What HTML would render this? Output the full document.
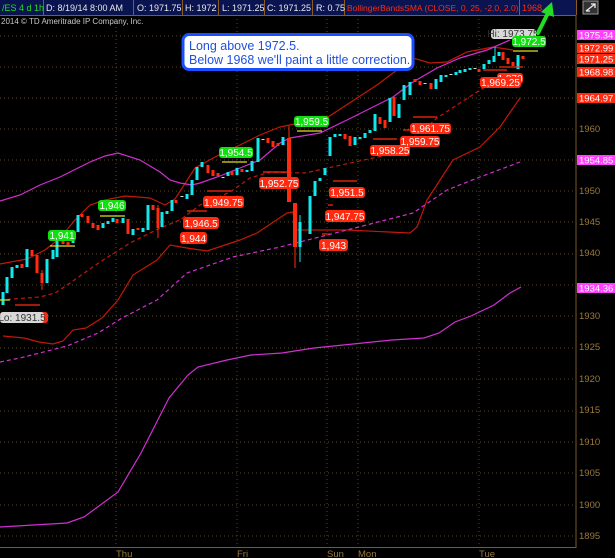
<!DOCTYPE html>
<html><head><meta charset="utf-8"><style>
html,body{margin:0;padding:0;background:#000;width:615px;height:558px;overflow:hidden}
svg{display:block;font-family:"Liberation Sans",sans-serif}
.c{fill:#10e8f0}.r{fill:#ff2a10}.w{fill:#ddd}
.lr text,.lg text,.lgr text{font-size:10px;fill:#fff;text-anchor:middle}
.lg text{fill:#fff}
.t{font-size:9.5px;fill:#9a7a3a}
</style></head><body>
<svg width="615" height="558" viewBox="0 0 615 558">
<rect width="615" height="558" fill="#000"/>
<g stroke="#5a4a20" stroke-width="1" stroke-dasharray="1,3">
<line x1="0" y1="36" x2="575" y2="36"/><line x1="0" y1="67" x2="575" y2="67"/><line x1="0" y1="98" x2="575" y2="98"/><line x1="0" y1="129" x2="575" y2="129"/><line x1="0" y1="160" x2="575" y2="160"/><line x1="0" y1="191" x2="575" y2="191"/><line x1="0" y1="222" x2="575" y2="222"/><line x1="0" y1="254" x2="575" y2="254"/><line x1="0" y1="285" x2="575" y2="285"/><line x1="0" y1="316" x2="575" y2="316"/><line x1="0" y1="348" x2="575" y2="348"/><line x1="0" y1="379" x2="575" y2="379"/><line x1="0" y1="411" x2="575" y2="411"/><line x1="0" y1="442" x2="575" y2="442"/><line x1="0" y1="473" x2="575" y2="473"/><line x1="0" y1="505" x2="575" y2="505"/><line x1="0" y1="536" x2="575" y2="536"/>
<line x1="116" y1="15" x2="116" y2="547"/><line x1="237" y1="15" x2="237" y2="547"/><line x1="327" y1="15" x2="327" y2="547"/><line x1="358" y1="15" x2="358" y2="547"/><line x1="479" y1="15" x2="479" y2="547"/>
</g>
<line x1="576" y1="15" x2="576" y2="548" stroke="#7a5a28"/>
<line x1="0" y1="547.5" x2="576" y2="547.5" stroke="#7a5a28"/>
<g class="t">
<text x="579" y="132">1960</text><text x="579" y="194">1950</text><text x="579" y="225">1945</text><text x="579" y="256">1940</text><text x="579" y="319">1930</text><text x="579" y="350">1925</text><text x="579" y="382">1920</text><text x="579" y="413">1915</text><text x="579" y="445">1910</text><text x="579" y="476">1905</text><text x="579" y="508">1900</text><text x="579" y="539">1895</text>
<text x="116" y="557">Thu</text><text x="237" y="557">Fri</text><text x="327" y="557">Sun</text><text x="358" y="557">Mon</text><text x="479" y="557">Tue</text>
</g>
<g fill="none" stroke-width="1.2">
<polyline stroke="#c01808" points="0,264 27,259 45,250 60,238 75,220 90,205 105,200 125,196 150,198 165,205 175,199 195,168 215,157 240,145 260,135 280,127 328,117 377,85 397,70 413,58 430,63 447,62 467,52 493,47 513,50"/>
<polyline stroke="#c01808" points="3,336 24,338 39,342 53,344 63,341 73,330 86,328 102,318 118,300 133,275 157,260 170,245 187,248 207,251 240,240 257,233 287,213 293,212 296,230 347,230 410,233 417,227 427,200 453,160 480,147 500,127 520,98"/>
<polyline stroke="#c01808" stroke-dasharray="4,3" points="0,300 40,297 55,293 70,283 100,262 130,243 160,228 180,220 200,205 230,192 250,178 270,172 305,173 373,158 397,153 437,118 480,90 505,75"/>
<polyline stroke="#d030d0" points="0,201 20,195 40,185 60,177 90,162 105,156 118,153 140,160 160,172 170,180 180,183 192,185 200,183 220,176 240,168 260,160 280,143 290,138 320,133 347,120 373,107 393,97 413,82 437,68 460,58 487,50 510,40"/>
<polyline stroke="#d030d0" stroke-dasharray="4,3" points="0,362 20,358 67,346 98,333 122,318 157,300 187,273 233,257 280,247 347,230 413,213 447,190 480,177 520,162"/>
<polyline stroke="#d030d0" points="0,527 67,523 84,517 118,492 141,453 169,398 188,375 198,367 227,360 251,355 282,353 314,348 353,344 392,340 424,338 439,333 455,322 471,316 494,305 510,293 521,287"/>
</g>
<g stroke-width="1">
<line x1="289" y1="126" x2="289" y2="202" stroke="#ff2a10"/><line x1="295" y1="203" x2="295" y2="268" stroke="#ff2a10"/><line x1="300" y1="215" x2="300" y2="262" stroke="#10e8f0"/><line x1="495" y1="47" x2="495" y2="60" stroke="#10e8f0"/><line x1="158" y1="205" x2="158" y2="238" stroke="#ff2a10"/><line x1="42" y1="270" x2="42" y2="290" stroke="#ff2a10"/>
</g>
<g>
<rect class="c" x="1.5" y="292" width="3" height="13"/><rect class="c" x="5.5" y="277" width="3" height="16"/><rect class="c" x="10.5" y="267" width="3" height="11"/><rect class="c" x="15.5" y="265" width="3" height="3"/><rect class="r" x="20.5" y="264" width="3" height="4"/><rect class="c" x="25.5" y="249" width="3" height="18"/><rect class="r" x="30.5" y="250" width="3" height="6"/><rect class="r" x="35.5" y="255" width="3" height="18"/><rect class="r" x="40.5" y="273" width="3" height="10"/><rect class="c" x="45.5" y="259" width="3" height="24"/><rect class="c" x="51.5" y="250" width="3" height="9"/><rect class="c" x="55.5" y="237" width="3" height="20"/><rect class="r" x="61.5" y="241" width="3" height="3"/><rect class="r" x="66.5" y="242" width="3" height="3"/><rect class="c" x="71.5" y="239" width="3" height="4"/><rect class="c" x="76.5" y="215" width="3" height="17"/><rect class="r" x="80.5" y="214" width="3" height="3"/><rect class="r" x="86.5" y="216" width="3" height="7"/><rect class="r" x="91.5" y="223" width="3" height="5"/><rect class="r" x="96.5" y="225" width="3" height="5"/><rect class="c" x="101.5" y="223" width="3" height="5"/><rect class="c" x="106.5" y="221" width="3" height="3"/><rect class="c" x="111.5" y="218" width="3" height="4"/><rect class="r" x="115.5" y="219" width="3" height="4"/><rect class="c" x="121.5" y="218" width="3" height="5"/><rect class="r" x="126.5" y="219" width="3" height="15"/><rect class="c" x="131.5" y="229" width="3" height="6"/><rect class="r" x="136.5" y="228" width="3" height="2"/><rect class="c" x="141.5" y="228" width="3" height="4"/><rect class="c" x="146.5" y="205" width="3" height="25"/><rect class="r" x="151.5" y="205" width="3" height="5"/><rect class="r" x="156.5" y="208" width="3" height="20"/><rect class="c" x="160.5" y="212" width="3" height="15"/><rect class="c" x="165.5" y="211" width="3" height="3"/><rect class="c" x="170.5" y="200" width="3" height="11"/><rect class="r" x="174.5" y="200" width="3" height="3"/><rect class="w" x="180.5" y="196" width="3" height="1"/><rect class="c" x="185.5" y="194" width="3" height="5"/><rect class="c" x="190.5" y="180" width="3" height="15"/><rect class="c" x="195.5" y="167" width="3" height="13"/><rect class="c" x="200.5" y="162" width="3" height="5"/><rect class="r" x="206.5" y="165" width="3" height="8"/><rect class="r" x="211.5" y="170" width="3" height="6"/><rect class="r" x="216.5" y="173" width="3" height="3"/><rect class="w" x="221.5" y="177" width="3" height="1"/><rect class="c" x="226.5" y="172" width="3" height="4"/><rect class="r" x="230.5" y="171" width="3" height="4"/><rect class="c" x="235.5" y="168" width="3" height="7"/><rect class="r" x="240.5" y="169" width="3" height="3"/><rect class="c" x="245.5" y="170" width="3" height="2"/><rect class="c" x="250.5" y="161" width="3" height="10"/><rect class="c" x="256.5" y="138" width="3" height="24"/><rect class="w" x="261.5" y="139" width="3" height="1"/><rect class="r" x="266.5" y="138" width="3" height="5"/><rect class="r" x="271.5" y="141" width="3" height="6"/><rect class="r" x="276.5" y="143" width="3" height="3"/><rect class="c" x="281.5" y="137" width="3" height="8"/><rect class="r" x="287" y="138" width="4" height="64"/><rect class="r" x="293" y="203" width="4" height="44"/><rect class="c" x="298.5" y="222" width="3" height="25"/><rect class="c" x="308.5" y="196" width="3" height="38"/><rect class="c" x="313.5" y="181" width="3" height="15"/><rect class="c" x="318.5" y="178" width="3" height="3"/><rect class="c" x="323.5" y="168" width="3" height="7"/><rect class="c" x="328.5" y="137" width="3" height="19"/><rect class="c" x="333.5" y="134" width="3" height="3"/><rect class="c" x="338.5" y="134" width="3" height="2"/><rect class="r" x="343.5" y="134" width="3" height="5"/><rect class="r" x="348.5" y="136" width="3" height="10"/><rect class="c" x="353.5" y="137" width="3" height="8"/><rect class="c" x="358.5" y="137" width="3" height="2"/><rect class="c" x="363.5" y="133" width="3" height="5"/><rect class="c" x="368.5" y="130" width="3" height="3"/><rect class="c" x="373.5" y="114" width="3" height="17"/><rect class="r" x="378.5" y="117" width="3" height="7"/><rect class="r" x="383.5" y="120" width="3" height="8"/><rect class="c" x="388.5" y="98" width="3" height="24"/><rect class="r" x="392.5" y="97" width="3" height="19"/><rect class="c" x="397.5" y="104" width="3" height="14"/><rect class="c" x="402.5" y="85" width="3" height="15"/><rect class="c" x="408.5" y="82" width="3" height="13"/><rect class="r" x="413.5" y="79" width="3" height="3"/><rect class="r" x="418.5" y="81" width="3" height="4"/><rect class="w" x="423.5" y="83" width="3" height="1"/><rect class="r" x="429.5" y="83" width="3" height="6"/><rect class="c" x="434.5" y="79" width="3" height="10"/><rect class="c" x="439.5" y="75" width="3" height="7"/><rect class="c" x="444.5" y="75" width="3" height="2"/><rect class="w" x="449.5" y="74" width="3" height="1"/><rect class="c" x="454.5" y="72" width="3" height="3"/><rect class="c" x="458.5" y="70" width="3" height="3"/><rect class="c" x="463.5" y="69" width="3" height="3"/><rect class="c" x="468.5" y="68" width="3" height="2"/><rect class="w" x="473.5" y="68" width="3" height="1"/><rect class="r" x="477.5" y="69" width="3" height="3"/><rect class="c" x="482.5" y="64" width="3" height="5"/><rect class="c" x="487.5" y="60" width="3" height="4"/><rect class="c" x="492.5" y="56" width="3" height="6"/><rect class="c" x="497.5" y="52" width="3" height="4"/><rect class="r" x="501.5" y="52" width="3" height="8"/><rect class="r" x="506.5" y="58" width="3" height="6"/><rect class="r" x="511.5" y="62" width="3" height="4"/><rect class="c" x="516.5" y="55" width="3" height="14"/><rect class="r" x="521.5" y="56" width="3" height="3"/>
</g>
<g stroke="#e0e020" stroke-width="1.2">
<line x1="50" y1="246" x2="75" y2="246"/><line x1="100" y1="216" x2="125" y2="216"/><line x1="222" y1="162" x2="247" y2="162"/><line x1="297" y1="131" x2="322" y2="131"/><line x1="513" y1="51" x2="538" y2="51"/><line x1="0" y1="300" x2="10" y2="300"/>
</g>
<g stroke="#ff2a10" stroke-width="1.2">
<line x1="15" y1="305" x2="40" y2="305"/><line x1="183" y1="227" x2="190" y2="227"/><line x1="187" y1="211" x2="207" y2="211"/><line x1="207" y1="191" x2="231" y2="191"/><line x1="263" y1="172" x2="287" y2="172"/><line x1="333" y1="181" x2="357" y2="181"/><line x1="328" y1="205" x2="333" y2="205"/><line x1="322" y1="234" x2="330" y2="234"/><line x1="373" y1="139" x2="397" y2="139"/><line x1="403" y1="130" x2="410" y2="130"/><line x1="413" y1="117" x2="437" y2="117"/><line x1="483" y1="70" x2="507" y2="70"/><line x1="499" y1="67" x2="523" y2="67"/>
</g>
<g class="lr">
<rect x="497" y="73" width="26" height="11" rx="3" fill="#ff2a10"/><text x="510" y="82">1,970</text>
<rect x="180" y="232" width="27" height="12" rx="3" fill="#ff2a10"/><text x="193.5" y="242">1,944</text>
<rect x="183" y="217" width="36" height="12" rx="3" fill="#ff2a10"/><text x="201" y="227">1,946.5</text>
<rect x="203" y="196" width="41" height="12" rx="3" fill="#ff2a10"/><text x="223.5" y="206">1,949.75</text>
<rect x="259" y="177" width="40" height="12" rx="3" fill="#ff2a10"/><text x="279" y="187">1,952.75</text>
<rect x="329" y="187" width="36" height="11" rx="3" fill="#ff2a10"/><text x="347" y="196">1,951.5</text>
<rect x="325" y="210" width="40" height="12" rx="3" fill="#ff2a10"/><text x="345" y="220">1,947.75</text>
<rect x="319" y="239" width="29" height="12" rx="3" fill="#ff2a10"/><text x="333.5" y="249">1,943</text>
<rect x="370" y="145" width="40" height="11" rx="3" fill="#ff2a10"/><text x="390" y="154">1,958.25</text>
<rect x="400" y="136" width="40" height="11" rx="3" fill="#ff2a10"/><text x="420" y="145">1,959.75</text>
<rect x="410" y="123" width="41" height="11" rx="3" fill="#ff2a10"/><text x="430.5" y="132">1,961.75</text>
<rect x="480" y="77" width="41" height="11" rx="3" fill="#ff2a10"/><text x="500.5" y="86">1,969.25</text>
</g>
<g class="lg">
<rect x="48" y="230" width="28" height="11" rx="3" fill="#10e010"/><text x="62" y="239">1,941</text>
<rect x="98" y="200" width="28" height="11" rx="3" fill="#10e010"/><text x="112" y="209">1,946</text>
<rect x="219" y="147" width="34" height="11" rx="3" fill="#10e010"/><text x="236" y="156">1,954.5</text>
<rect x="294" y="116" width="35" height="11" rx="3" fill="#10e010"/><text x="311.5" y="125">1,959.5</text>
</g>
<g class="lgr">
<rect x="491" y="29" width="45" height="10" rx="3" fill="#d8d8d8"/><text x="513" y="37" style="fill:#333">Hi: 1973.75</text>
<rect x="0" y="312" width="48" height="11" rx="3" fill="#ff2a10"/><rect x="0" y="312" width="44" height="11" rx="3" fill="#d8d8d8"/><text x="22" y="321" style="fill:#333">Lo: 1931.5</text>
</g>
<g class="lg"><rect x="512" y="36" width="34" height="11" rx="3" fill="#10e010"/><text x="529" y="45">1,972.5</text></g>
<g style="font-size:9.5px;fill:#fff">
<rect x="577" y="30" width="38" height="10" fill="#ff40ff"/><text x="579" y="38.5">1975.34</text>
<rect x="577" y="43" width="38" height="10" fill="#ff2a10"/><text x="579" y="51.5">1972.99</text>
<rect x="577" y="54" width="38" height="10" fill="#ff2a10"/><text x="579" y="62.5">1971.25</text>
<rect x="577" y="67" width="38" height="10" fill="#ff2a10"/><text x="579" y="75.5">1968.98</text>
<rect x="577" y="93" width="38" height="10" fill="#ff2a10"/><text x="579" y="101.5">1964.97</text>
<rect x="577" y="155" width="38" height="10" fill="#ff40ff"/><text x="579" y="163.5">1954.85</text>
<rect x="577" y="283" width="38" height="10" fill="#ff40ff"/><text x="579" y="291.5">1934.36</text>
</g>
<rect x="0" y="0" width="576" height="15" fill="#0a1450"/>
<g stroke="#8a5a20"><line x1="43.5" y1="0" x2="43.5" y2="15"/><line x1="133.5" y1="0" x2="133.5" y2="15"/><line x1="182.5" y1="0" x2="182.5" y2="15"/><line x1="218.5" y1="0" x2="218.5" y2="15"/><line x1="264.5" y1="0" x2="264.5" y2="15"/><line x1="312.5" y1="0" x2="312.5" y2="15"/><line x1="344.5" y1="0" x2="344.5" y2="15"/><line x1="519.5" y1="0" x2="519.5" y2="15"/><line x1="0" y1="15.5" x2="576" y2="15.5"/><line x1="576.5" y1="0" x2="576.5" y2="15"/></g>
<g style="font-size:9px;fill:#e8e8e8">
<text x="2" y="11" style="fill:#20e020">/ES 4 d 1h</text>
<text x="46" y="11">D: 8/19/14 8:00 AM</text>
<text x="137" y="11">O: 1971.75</text>
<text x="185" y="11">H: 1972</text>
<text x="222" y="11">L: 1971.25</text>
<text x="267" y="11">C: 1971.25</text>
<text x="316" y="11">R: 0.75</text>
<text x="347" y="11" style="fill:#ff2a10;font-size:8.5px">BollingerBandsSMA (CLOSE, 0, 25, -2.0, 2.0)</text>
<text x="522" y="11" style="fill:#ff2a10">1968.</text>
</g>
<rect x="583" y="1" width="15" height="13" fill="#333" stroke="#999"/>
<path d="M586 11 L595 4 M591 4 H595 V8 M586 11 H590" stroke="#eee" stroke-width="1.3" fill="none"/>
<text x="1" y="24" style="font-size:8px;fill:#c8c8c8">2014 © TD Ameritrade IP Company, Inc.</text>
<line x1="538" y1="33" x2="548" y2="13" stroke="#22dd22" stroke-width="4" stroke-linecap="round"/>
<polygon points="541,12 552,2 554,17" fill="#22dd22"/>
<rect x="183" y="34.5" width="230" height="35" rx="6" fill="#fff" stroke="#1a50ff" stroke-width="3"/>
<text x="189" y="50" style="font-size:12.5px;fill:#2050e0">Long above 1972.5.</text>
<text x="189" y="64" style="font-size:12.5px;fill:#2050e0">Below 1968 we'll paint a little correction.</text>
</svg>
</body></html>
